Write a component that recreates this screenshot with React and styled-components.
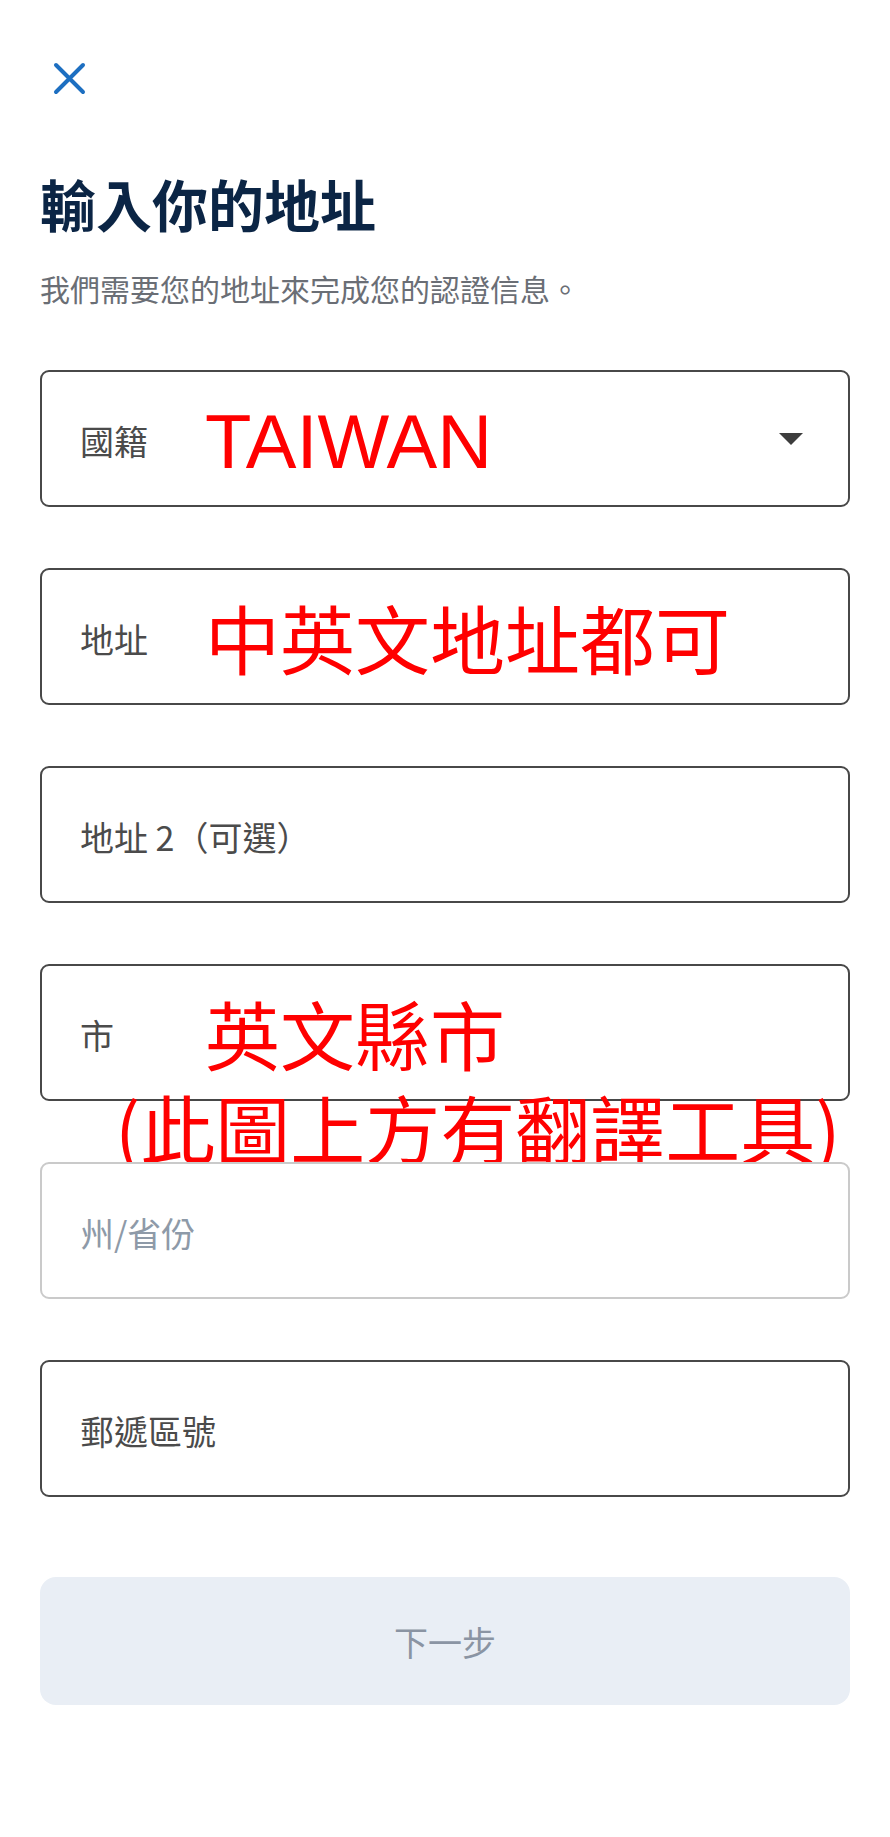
import React from "react";
import styled, { createGlobalStyle } from "styled-components";

const GlobalStyle = createGlobalStyle`
  body {
    margin: 0;
    background: #ffffff;
    font-family: "Noto Sans CJK TC", "Noto Sans", sans-serif;
  }
`;

const Page = styled.div`
  padding: 0 40px 133px;
`;

const CloseButton = styled.button`
  display: block;
  margin: 62px 0 0 13px;
  padding: 0;
  width: 33px;
  height: 33px;
  border: none;
  background: none;
  cursor: pointer;
`;

const Title = styled.h1`
  margin: 74px 0 0;
  font-size: 56px;
  line-height: 67px;
  font-weight: 700;
  color: #0b2545;
`;

const Subtitle = styled.p`
  margin: 32px 0 0;
  font-size: 30px;
  line-height: 40px;
  color: #6a6e75;
`;

const Form = styled.div`
  display: flex;
  flex-direction: column;
  gap: 61px;
  margin-top: 62px;
`;

const Field = styled.div`
  position: relative;
  z-index: ${(p) => p.$layer || 0};
  display: flex;
  align-items: center;
  box-sizing: border-box;
  height: 137px;
  padding: 0 38px;
  border: 2px solid ${(p) => (p.$disabled ? "#cacaca" : "#484848")};
  border-radius: 9px;
  background: #ffffff;
`;

const Label = styled.span`
  flex: ${(p) => (p.$hasValue ? "0 0 125px" : "0 1 auto")};
  padding-top: 4px;
  font-size: 34px;
  line-height: 1;
  color: ${(p) => (p.$muted ? "#8e9aa8" : "#4b4b4b")};
  white-space: nowrap;
`;

const Value = styled.span`
  padding-top: ${(p) => (p.$latin ? "7px" : "0")};
  font-family: ${(p) =>
    p.$latin ? '"Liberation Sans", Arial, sans-serif' : '"Noto Sans CJK TC", sans-serif'};
  font-size: ${(p) => (p.$latin ? "76px" : "75px")};
  line-height: 1;
  color: #ff0000;
  white-space: nowrap;
`;

const Caret = styled.span`
  margin-left: auto;
  margin-right: 7px;
  width: 0;
  height: 0;
  border-left: 12px solid transparent;
  border-right: 12px solid transparent;
  border-top: 12px solid #3d3d3d;
`;

// red note written over the screenshot, partly hidden by the next field
const Note = styled.span`
  position: absolute;
  left: 73px;
  top: 123px;
  font-size: 75px;
  line-height: 1;
  color: #ff0000;
  white-space: nowrap;
  pointer-events: none;
`;

const NextButton = styled.button`
  display: flex;
  align-items: center;
  justify-content: center;
  width: 100%;
  height: 128px;
  margin-top: 80px;
  border: none;
  border-radius: 16px;
  background: #e9eef5;
  font-family: "Noto Sans CJK TC", sans-serif;
  font-size: 34px;
  color: #8a94a3;
  cursor: not-allowed;
`;

const CloseIcon = () => (
  <svg width="33" height="33" viewBox="0 0 33 33">
    <path
      d="M3 3 L30 30 M30 3 L3 30"
      stroke="#1d6fc1"
      strokeWidth="4"
      strokeLinecap="round"
      fill="none"
    />
  </svg>
);

const App = () => {
  return (
    <>
      <GlobalStyle />
      <Page>
        <CloseButton aria-label="close">
          <CloseIcon />
        </CloseButton>
        <Title>輸入你的地址</Title>
        <Subtitle>我們需要您的地址來完成您的認證信息。</Subtitle>

        <Form>
          <Field>
            <Label $hasValue>國籍</Label>
            <Value $latin>TAIWAN</Value>
            <Caret />
          </Field>
          <Field>
            <Label $hasValue>地址</Label>
            <Value>中英文地址都可</Value>
          </Field>
          <Field>
            <Label>地址 2（可選）</Label>
          </Field>
          <Field $layer={1}>
            <Label $hasValue>市</Label>
            <Value>英文縣市</Value>
            <Note>(此圖上方有翻譯工具)</Note>
          </Field>
          <Field $layer={2} $disabled>
            <Label $muted>州/省份</Label>
          </Field>
          <Field>
            <Label>郵遞區號</Label>
          </Field>
        </Form>

        <NextButton disabled>下一步</NextButton>
      </Page>
    </>
  );
};

export default App;
